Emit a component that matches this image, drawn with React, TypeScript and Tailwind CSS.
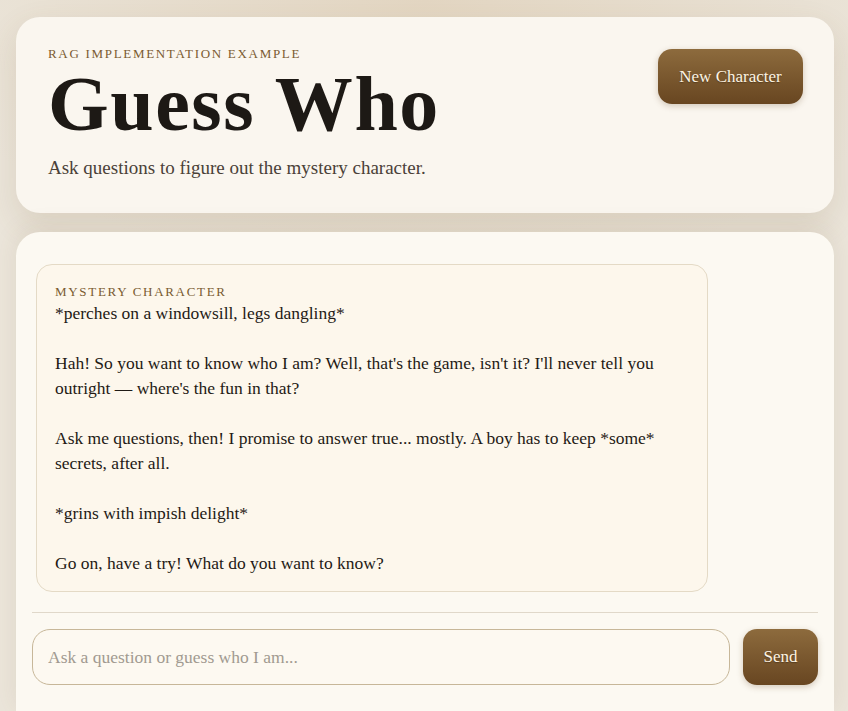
import React from 'react';

const serif = "font-['Liberation_Serif','Times_New_Roman',serif]";

const greeting = `*perches on a windowsill, legs dangling*

Hah! So you want to know who I am? Well, that's the game, isn't it? I'll never tell you outright — where's the fun in that?

Ask me questions, then! I promise to answer true... mostly. A boy has to keep *some* secrets, after all.

*grins with impish delight*

Go on, have a try! What do you want to know?`;

function BrownButton({ children, className = '' }: { children: React.ReactNode; className?: string }) {
  return (
    <button
      className={`rounded-[14px] bg-gradient-to-b from-[#8d6b3d] to-[#684621] text-[#fdf4e3] text-[17px] shadow-[0_2px_6px_rgba(90,60,25,0.25)] [text-shadow:0_1px_1px_rgba(40,25,10,0.4)] ${className}`}
    >
      {children}
    </button>
  );
}

export default function App() {
  return (
    <div
      className={`${serif} min-h-[711px] pl-4 pr-[14px] pt-[17px] bg-[#ebe5da] bg-[radial-gradient(ellipse_60%_40%_at_50%_0%,#e3d6c2_0%,#ebe5da_100%)] flex flex-col gap-[19px]`}
    >
      <header className="rounded-[24px] bg-[#faf6ef] pl-8 pr-[31px] pt-[29px] pb-[33px] flex justify-between items-start shadow-[0_12px_32px_rgba(120,90,50,0.14)]">
        <div>
          <p className="text-[13px] leading-[15px] uppercase tracking-[0.13em] text-[#7a5b31]">
            RAG Implementation Example
          </p>
          <h1 className="text-[78px] leading-[86px] font-bold text-[#1d1915] tracking-[0.02em]">
            Guess Who
          </h1>
          <p className="mt-[9px] text-[19px] leading-[24px] text-[#4a4138]">
            Ask questions to figure out the mystery character.
          </p>
        </div>
        <BrownButton className="mt-[3px] w-[145px] h-[55px]">New Character</BrownButton>
      </header>

      <main className="rounded-t-[24px] bg-[#fcf9f2] px-4 flex-1 shadow-[0_-4px_24px_rgba(120,90,50,0.10)]">
        <div className="px-1 pt-8 pb-5">
          <div className="w-[672px] rounded-[16px] border border-[#e4dac6] bg-[#fdf7ec] px-[18px] pt-5 pb-[15px]">
            <p className="text-[13px] leading-[14px] uppercase tracking-[0.13em] text-[#7a5b31]">
              Mystery Character
            </p>
            <p className="mt-[2px] whitespace-pre-wrap text-[17.5px] leading-[25px] text-[#1f1a15]">
              {greeting}
            </p>
          </div>
        </div>
        <div className="border-t border-[#e0d8ca] pt-4 flex gap-[13px]">
          <input
            className="flex-1 h-[56px] rounded-[18px] border-[1.5px] border-[#c7b799] bg-[#fdf9f1] px-[15px] text-[17.5px] text-[#1f1a15] placeholder:text-[#a19a90] outline-none"
            placeholder="Ask a question or guess who I am..."
          />
          <BrownButton className="w-[75px] h-[56px]">Send</BrownButton>
        </div>
      </main>
    </div>
  );
}
